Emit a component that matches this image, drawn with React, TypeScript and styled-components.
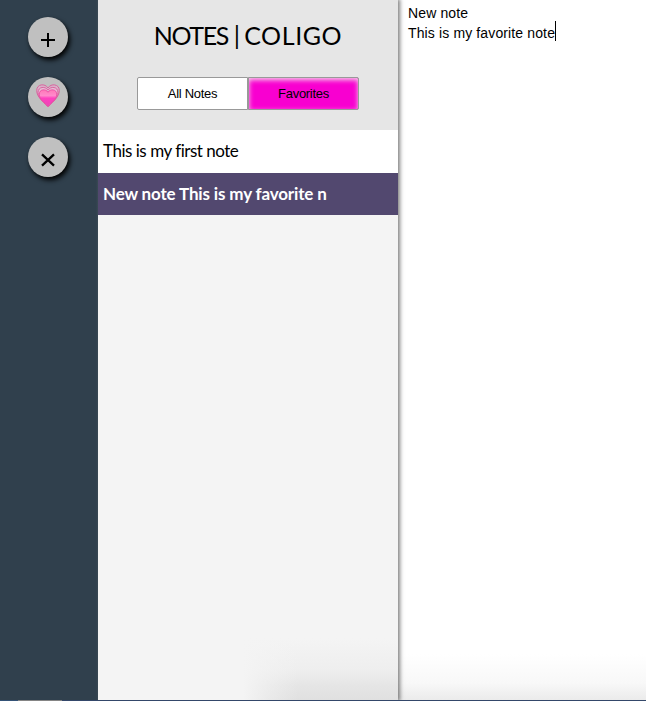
import React from 'react';
import styled, { createGlobalStyle } from 'styled-components';

const GlobalStyle = createGlobalStyle`
  * { box-sizing: border-box; }
  body { margin: 0; overflow: hidden; background: #fff; }
`;

const Window = styled.div`
  display: grid;
  grid-template-columns: 98px 300px 1fr;
  grid-template-rows: 700px 1px;
  width: 100%;
  height: 701px;
  overflow: hidden;
`;

const Sidebar = styled.nav`
  display: flex;
  flex-direction: column;
  gap: 20px;
  padding: 17px 0 0 28px;
  background: linear-gradient(90deg, transparent 96px, #3a4954 98px), #30404d;
`;

const RoundButton = styled.button`
  display: flex;
  align-items: center;
  justify-content: center;
  width: 40px;
  height: 40px;
  padding: 0;
  border: 0;
  border-radius: 50%;
  background: #c0c0c0;
  box-shadow: 2px 3px 5px 0 #000;
`;

const NotesPanel = styled.section`
  z-index: 1;
  display: flex;
  flex-direction: column;
  background: #f4f4f4;
  box-shadow: 1px 0 4px 1px rgba(0, 0, 0, 0.5);
  clip-path: inset(0 -10px 0 0);
`;

const Header = styled.header`
  display: flex;
  flex-direction: column;
  align-items: center;
  height: 130px;
  background: #e6e6e6;
`;

const Title = styled.h1`
  display: flex;
  gap: 6px;
  margin: 19px 0 0;
  height: 32px;
  font: 400 25px/32px "Century Gothic", Lato, sans-serif;
  white-space: nowrap;
  color: #000;
`;

const TitleWord = styled.span<{ $spacing: number }>`
  letter-spacing: ${p => p.$spacing}px;
`;

const Filters = styled.div`
  display: flex;
  width: 222px;
  height: 33px;
  margin-top: 26px;
`;

const FilterButton = styled.button<{ $active?: boolean }>`
  flex: 1;
  padding: 0;
  border: 1px solid #999;
  border-radius: ${p => (p.$active ? '0 2px 2px 0' : '2px 0 0 2px')};
  background: ${p => (p.$active ? '#f800d0' : '#fff')};
  box-shadow: ${p => (p.$active ? 'inset 0 2px 5px 0 #f4d4e8' : 'none')};
  font: 13px/31px "Liberation Sans", Arial, sans-serif;
  letter-spacing: -0.3px;
  color: #000;
`;

const NoteRow = styled.div<{ $selected?: boolean }>`
  height: ${p => (p.$selected ? 42 : 43)}px;
  padding-left: 5px;
  background: ${p => (p.$selected ? '#52486f' : '#fff')};
  color: ${p => (p.$selected ? '#fff' : '#000')};
  font: ${p => (p.$selected ? 700 : 400)} 17px/42px "Century Gothic", Lato, sans-serif;
  letter-spacing: ${p => (p.$selected ? '-0.15px' : '-0.48px')};
  white-space: nowrap;
`;

const Spacer = styled.div`
  flex: 1;
  background:
    linear-gradient(90deg, #f4f4f4 145px, #f4f4f480 170px, #f4f4f400 200px),
    linear-gradient(to top, #e0e0e0, #e5e5e5 14px, #eee 30px, #f4f4f4 62px);
`;

const Editor = styled.main`
  padding: 3px 0 0 10px;
  background: linear-gradient(#fff 654px, #f8f8f8 683px, #ebebeb 700px);
  font: 14px/20px "Liberation Sans", Arial, sans-serif;
  letter-spacing: 0.13px;
  color: #000;
  white-space: nowrap;
`;

const Line = styled.div`
  display: flex;
  height: 20px;
`;

const Caret = styled.span`
  width: 1px;
  height: 20px;
  margin-top: -2px;
  background: #000;
`;

const BottomEdge = styled.div`
  grid-column: 1 / -1;
  background: linear-gradient(90deg, #345276 18px, #858585 18px, #858585 62px, #34486a 62px);
`;

function PlusIcon() {
  return (
    <svg width="40" height="40" viewBox="0 0 40 40" fill="none" stroke="#000" strokeWidth="2">
      <path d="M13 23H27M20 16V30" />
    </svg>
  );
}

function CrossIcon() {
  return (
    <svg width="40" height="40" viewBox="0 0 40 40" fill="none" stroke="#000" strokeWidth="2.3">
      <path d="M14 17.3L26 28.7M26 17.3L14 28.7" />
    </svg>
  );
}

const heart = 'M20 29.5C16 25 8.7 20.5 8.7 13.4C8.7 7 17 6 20 11C23 6 31.3 7 31.3 13.4C31.3 20.5 24 25 20 29.5Z';

function HeartIcon() {
  return (
    <svg width="40" height="40" viewBox="0 0 40 40">
      <defs>
        <linearGradient id="heartFill" x1="0" y1="0" x2="0" y2="1">
          <stop stopColor="#ff78b8" />
          <stop offset=".35" stopColor="#ff8acb" />
          <stop offset=".5" stopColor="#ff41bf" />
          <stop offset="1" stopColor="#e947b5" />
        </linearGradient>
      </defs>
      <path d={heart} fill="#d8b2c8" stroke="#d9649f" strokeWidth="1" />
      <path d={heart} transform="translate(20 29.5) scale(.88) translate(-20 -29.5)" fill="#e6bdd4" stroke="#d9599a" />
      <path d={heart} transform="translate(20 29.5) scale(.77) translate(-20 -29.5)" fill="url(#heartFill)" stroke="#e8439f" />
    </svg>
  );
}

export default function App() {
  return (
    <>
      <GlobalStyle />
      <Window>
        <Sidebar>
          <RoundButton aria-label="New note"><PlusIcon /></RoundButton>
          <RoundButton aria-label="Favorite note"><HeartIcon /></RoundButton>
          <RoundButton aria-label="Delete note"><CrossIcon /></RoundButton>
        </Sidebar>
        <NotesPanel>
          <Header>
            <Title>
              <TitleWord $spacing={-1.4}>NOTES</TitleWord>
              <TitleWord $spacing={-2}>|</TitleWord>
              <TitleWord $spacing={0.6}>COLIGO</TitleWord>
            </Title>
            <Filters>
              <FilterButton>All Notes</FilterButton>
              <FilterButton $active>Favorites</FilterButton>
            </Filters>
          </Header>
          <NoteRow>This is my first note</NoteRow>
          <NoteRow $selected>New note This is my favorite n</NoteRow>
          <Spacer />
        </NotesPanel>
        <Editor>
          <Line>New note</Line>
          <Line>This is my favorite note<Caret /></Line>
        </Editor>
        <BottomEdge />
      </Window>
    </>
  );
}
